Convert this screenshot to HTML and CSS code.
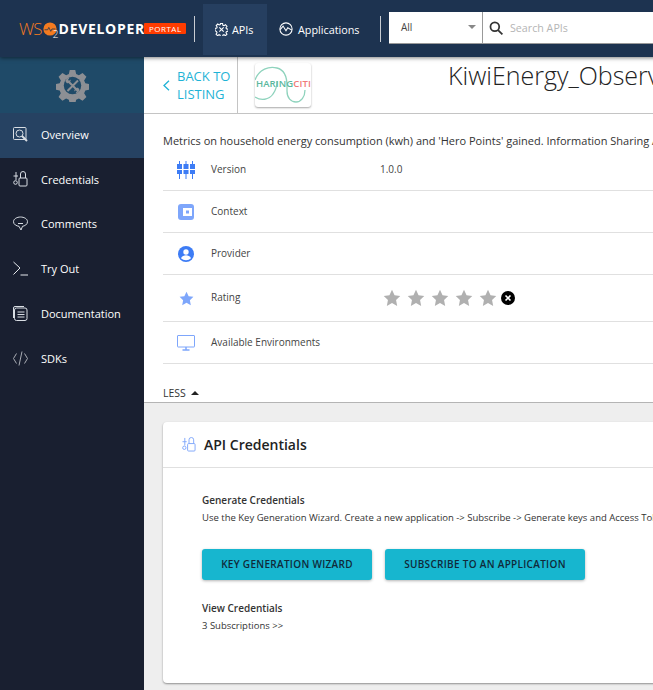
FILE: index.html
```html
<!DOCTYPE html>
<html lang="en">
<head>
  <meta charset="UTF-8" />
  <title>KiwiEnergy_Observations - WSO2 Developer Portal</title>
  <link rel="stylesheet" href="styles.css">
</head>
<body>
  <header class="topbar">
    <div class="logo">
      <span class="logo-wso">WS</span>
      <svg class="logo-o" width="14" height="14" viewBox="0 0 18 18"><circle cx="9" cy="9" r="8.500" fill="#f47b20"/><path d="M2 10h4l1.500-3 2.500 5 1.500-3h4.500" fill="none" stroke="#1d3350" stroke-width="1"/></svg>
      <span class="logo-two">2</span>
      <span class="logo-dev">DEVELOPER</span>
      <span class="logo-portal">PORTAL</span>
    </div>
    <div class="bar-sep"></div>
    <a class="nav-link active">
      <svg width="13" height="13" viewBox="0 0 24 24" fill="none" stroke="#fff" stroke-width="2"><path d="M10 1h4l.6 3.200 2 .8 2.700-1.800 2.800 2.800-1.800 2.700.8 2 3.200.6v4l-3.200.6-.8 2 1.800 2.700-2.800 2.800-2.700-1.800-2 .8-.6 3.200h-4l-.6-3.200-2-.8-2.700 1.800-2.800-2.800 1.800-2.700-.8-2L0 14v-4l3.200-.6.8-2L2.200 4.700 5 1.900l2.700 1.800 2-.8z"/><path d="M8 8l8 8M16 8l-8 8"/></svg>
      APIs
    </a>
    <a class="nav-link">
      <svg width="14" height="14" viewBox="0 0 24 24" fill="none" stroke="#fff" stroke-width="1.800"><circle cx="12" cy="12" r="10.500"/><path d="M2 13l5-6 5 8 3-5 7 4"/></svg>
      Applications
    </a>
    <div class="bar-sep sep-two"></div>
    <div class="search">
      <div class="search-type">All<span class="caret"></span></div>
      <div class="search-box">
        <svg width="14" height="14" viewBox="0 0 24 24" fill="none" stroke="#333" stroke-width="3"><circle cx="10" cy="10" r="7.500"/><path d="M15.500 15.500L23 23"/></svg>
        <span>Search APIs</span>
      </div>
    </div>
  </header>

  <div class="layout">
    <aside class="sidebar">
      <div class="side-head">
        <svg width="33" height="33" viewBox="0 0 36 36">
          <path fill="#8d8f94" d="M15 1h6l1 4.500 3 1.300 4-2.500 4.200 4.200-2.500 4 1.300 3 4.500 1v6l-4.500 1-1.300 3 2.500 4-4.200 4.200-4-2.500-3 1.300-1 4.500h-6l-1-4.500-3-1.300-4 2.500-4.200-4.200 2.500-4-1.300-3-4.500-1v-6l4.500-1 1.300-3-2.500-4 4.200-4.200 4 2.500 3-1.300z"/>
          <circle cx="18" cy="18" r="9.500" fill="#1f4a68"/>
          <path d="M13 13l10.500 10.500M24 12.500L12.500 24" stroke="#8d8f94" stroke-width="2.200"/>
          <path d="M10.500 14a3.500 3.500 0 0 1 4-4l-1.500 2 1 1 2-1.500a3.500 3.500 0 0 1-4 4z" fill="#8d8f94"/>
          <path d="M25.500 22a3.500 3.500 0 0 1-4 4l1.500-2-1-1-2 1.500a3.500 3.500 0 0 1 4-4z" fill="#8d8f94"/>
        </svg>
      </div>
      <a class="side-item current">
        <svg width="15" height="15" viewBox="0 0 15 15" fill="none" stroke="#d8dde3"><rect x=".5" y=".5" width="12.500" height="12" rx="1"/><circle cx="6.500" cy="6.500" r="3.500"/><path d="M9 9l5 5" stroke-width="2"/></svg>
        Overview
      </a>
      <a class="side-item">
        <svg width="15" height="16" viewBox="0 0 15 16" fill="none" stroke="#d8dde3"><rect x="6" y="7" width="8" height="8" rx="1"/><path d="M7.500 7V3a2.500 2.500 0 0 1 5 0v4M3 1v8"/><circle cx="2.500" cy="11.500" r="1.800"/><path d="M.5 5H5"/></svg>
        Credentials
      </a>
      <a class="side-item">
        <svg width="15" height="15" viewBox="0 0 15 15" fill="none" stroke="#d8dde3"><path d="M7.500 1C11 1 14.500 2.800 14.500 5.700S11.500 10 9.500 10.300L8 14 6 10.300C3.500 10 .5 8.500.5 5.700S4 1 7.500 1z"/><path d="M5 7.500h5"/></svg>
        Comments
      </a>
      <a class="side-item">
        <svg width="15" height="15" viewBox="0 0 15 15" fill="none" stroke="#e6e9ed"><path d="M.5 1l6.500 6-6.500 6.500M7.500 14H15"/></svg>
        Try Out
      </a>
      <a class="side-item">
        <svg width="15" height="15" viewBox="0 0 15 15" fill="none" stroke="#d8dde3"><rect x="1.500" y="2" width="12.500" height="12.500" rx="2"/><path d="M.5 12V2A1.500 1.500 0 0 1 2 .5h9M4.500 6h7M4.500 8.500h7M4.500 11h7"/></svg>
        Documentation
      </a>
      <a class="side-item">
        <svg width="15" height="15" viewBox="0 0 15 15" fill="none" stroke="#a9adb5"><path d="M3.500 2.500L.5 7.500l3 5M11.500 2.500l3 5-3 5M9 .5L6 14.500"/></svg>
        SDKs
      </a>
    </aside>

    <main class="content">
      <div class="api-head">
        <a class="back">
          <svg width="7" height="11" viewBox="0 0 7 11" fill="none" stroke="#1fb3d6" stroke-width="1.300"><path d="M6 .8L1 5.500l5 4.700"/></svg>
          <span>BACK TO<br>LISTING</span>
        </a>
        <div class="api-logo-wrap">
          <div class="api-logo">
            <svg width="56" height="44" viewBox="0 0 56 44" fill="none" stroke="#8fd3bd" stroke-width="1.300"><path d="M0 17C4 6 14 3 22 5s10 10 10 18v5c0 7 4 11 9 11s9-5 9-12"/><path d="M0 34c6 4 14 3 18-3 3-4 4-9 4-13"/></svg>
            <span class="sharing">HARING<b>CITII</b></span>
          </div>
        </div>
        <h1 class="api-title">KiwiEnergy_Observations</h1>
      </div>

      <div class="details">
        <p class="desc">Metrics on household energy consumption (kwh) and 'Hero Points' gained. Information Sharing Agreement applies to this data.</p>
        <div class="info-row">
          <div class="info-icon"><svg width="18" height="18" viewBox="0 0 18 18" fill="#3d7cf5"><path d="M2 0h1v3h2v5H0V3h2zM8.500 0h1v3h2v5h-5V3h2zM15 0h1v3h2v5h-5V3h2z"/><path d="M0 9h5v4H3v5H2v-5H0zM6.500 9h5v4h-2v5h-1v-5h-2zM13 9h5v4h-2v5h-1v-5h-2z"/></svg></div>
          <div class="info-label">Version</div>
          <div class="info-value">1.0.0</div>
        </div>
        <div class="info-row">
          <div class="info-icon"><svg width="16" height="16" viewBox="0 0 16 16"><rect width="16" height="16" rx="3" fill="#7ea6fb"/><rect x="5" y="4" width="9" height="8" fill="#fff"/><rect x="8" y="6.500" width="3" height="3" fill="#7ea6fb"/></svg></div>
          <div class="info-label">Context</div>
        </div>
        <div class="info-row">
          <div class="info-icon"><svg width="16" height="16" viewBox="0 0 16 16"><circle cx="8" cy="8" r="8" fill="#3d7cf5"/><circle cx="8" cy="6" r="2.700" fill="#fff"/><path d="M3 12.300c1-2.300 3-3 5-3s4 .7 5 3c-1.300 1.300-3 2-5 2s-3.700-.7-5-2z" fill="#fff"/></svg></div>
          <div class="info-label">Provider</div>
        </div>
        <div class="info-row row-rating">
          <div class="info-icon"><svg width="15" height="15" viewBox="0 0 24 24" fill="#7ea6fb"><path d="M12 1l3.400 7.400 7.600.9-5.600 5.300 1.500 8L12 18.700 5.100 22.600l1.500-8L1 9.300l7.600-.9z"/></svg></div>
          <div class="info-label">Rating</div>
          <div class="stars">
            <svg width="18" height="18" viewBox="0 0 24 24" fill="#b0b0b0"><path d="M12 1l3.400 7.400 7.600.9-5.600 5.300 1.500 8L12 18.700 5.100 22.600l1.500-8L1 9.300l7.600-.9z"/></svg>
            <svg width="18" height="18" viewBox="0 0 24 24" fill="#b0b0b0"><path d="M12 1l3.400 7.400 7.600.9-5.600 5.300 1.500 8L12 18.700 5.100 22.600l1.500-8L1 9.300l7.600-.9z"/></svg>
            <svg width="18" height="18" viewBox="0 0 24 24" fill="#b0b0b0"><path d="M12 1l3.400 7.400 7.600.9-5.600 5.300 1.500 8L12 18.700 5.100 22.600l1.500-8L1 9.300l7.600-.9z"/></svg>
            <svg width="18" height="18" viewBox="0 0 24 24" fill="#b0b0b0"><path d="M12 1l3.400 7.400 7.600.9-5.600 5.300 1.500 8L12 18.700 5.100 22.600l1.500-8L1 9.300l7.600-.9z"/></svg>
            <svg width="18" height="18" viewBox="0 0 24 24" fill="#b0b0b0"><path d="M12 1l3.400 7.400 7.600.9-5.600 5.300 1.500 8L12 18.700 5.100 22.600l1.500-8L1 9.300l7.600-.9z"/></svg>
            <svg class="clear-rating" width="14" height="14" viewBox="0 0 14 14"><circle cx="7" cy="7" r="7" fill="#000"/><path d="M4.500 4.500l5 5M9.500 4.500l-5 5" stroke="#fff" stroke-width="1.600"/></svg>
          </div>
        </div>
        <div class="info-row">
          <div class="info-icon"><svg width="18" height="16" viewBox="0 0 18 16" fill="none" stroke="#7ea6fb"><rect x=".5" y=".5" width="17" height="11.500" rx=".5"/><path d="M9 12v3M5.500 15h7" stroke-width="1.500"/></svg></div>
          <div class="info-label">Available Environments</div>
        </div>
        <div class="less">LESS<span class="less-arrow"></span></div>
      </div>

      <section class="panel-area">
        <div class="card">
          <div class="card-head">
            <svg width="14" height="15" viewBox="0 0 15 16" fill="none" stroke="#7ea6fb"><rect x="6" y="7" width="8" height="8" rx="1"/><path d="M7.500 7V3a2.500 2.500 0 0 1 5 0v4M3 1v8"/><circle cx="2.500" cy="11.500" r="1.800"/><path d="M.5 5H5"/></svg>
            <h2>API Credentials</h2>
          </div>
          <div class="card-body">
            <h3>Generate Credentials</h3>
            <p>Use the Key Generation Wizard. Create a new application -&gt; Subscribe -&gt; Generate keys and Access Token to invoke this API.</p>
            <div class="actions">
              <button class="btn btn-key">KEY GENERATION WIZARD</button>
              <button class="btn btn-sub">SUBSCRIBE TO AN APPLICATION</button>
            </div>
            <h3>View Credentials</h3>
            <p>3 Subscriptions &gt;&gt;</p>
          </div>
        </div>
      </section>
    </main>
  </div>
</body>
</html>
```

FILE: styles.css
```css
* {
  margin: 0;
  padding: 0;
  box-sizing: border-box;
}

html, body {
  height: 100%;
  overflow: hidden;
}

body {
  font-family: "Open Sans", sans-serif;
  font-size: 11px;
  color: #333;
  background: #fff;
  width: 653px;
  display: flex;
  flex-direction: column;
}

.topbar {
  flex: 0 0 57px;
  width: 1000px;
  background: #1d3350;
  display: flex;
  align-items: center;
  color: #fff;
  padding-left: 19px;
  position: relative;
  z-index: 2;
  box-shadow: 0 1px 4px rgba(0, 0, 0, 0.5);
}

.logo {
  display: flex;
  align-items: center;
  width: 167px;
  height: 24px;
}

.logo-wso {
  color: #f47b20;
  font-size: 17px;
  font-weight: 300;
  letter-spacing: -0.8px;
}

.logo-o {
  margin-left: 1px;
}

.logo-two {
  font-size: 10px;
  font-weight: 300;
  margin: 10px 0 0 -4px;
}

.logo-dev {
  font-size: 14px;
  font-weight: 700;
  letter-spacing: 0.7px;
  margin-left: 0;
}

.logo-portal {
  background: #ff3c00;
  font-size: 8px;
  letter-spacing: 0.5px;
  line-height: 11px;
  padding: 0 4px 0 5px;
  margin-left: -1px;
  margin-top: -1px;
  border-radius: 1px;
}

.bar-sep {
  width: 1px;
  height: 26px;
  background: #c8ccd2;
  margin-left: 8px;
}

.sep-two {
  margin-left: 0;
}

.nav-link {
  display: flex;
  align-items: center;
  gap: 4px;
  height: 51px;
  font-size: 10.800px;
  color: #fff;
  margin-top: 1px;
  padding: 0 12px;
}

.nav-link.active {
  width: 64px;
  margin-left: 8px;
  padding: 0 12px;
  background: #263f60;
}

.nav-link:not(.active) {
  width: 113px;
  padding-left: 12px;
  gap: 5px;
}

.search {
  display: flex;
  height: 32px;
  margin-left: 8px;
  margin-top: -1px;
  background: #fff;
  border-bottom: 1px solid #999;
}

.search-type {
  width: 94px;
  padding-left: 12px;
  color: #444;
  font-size: 10px;
  line-height: 31px;
  border-right: 1px solid #999;
  position: relative;
}

.caret {
  position: absolute;
  right: 6px;
  top: 13px;
  border: 4px solid transparent;
  border-top: 4px solid #888;
  border-bottom: 0;
}

.search-box {
  width: 400px;
  display: flex;
  align-items: center;
  gap: 7px;
  padding-left: 6px;
  color: #b5b5b5;
  font-size: 10.700px;
}

.layout {
  flex: 1;
  display: flex;
  min-height: 0;
}

.sidebar {
  flex: 0 0 144px;
  background: #191f30;
}

.side-head {
  height: 56px;
  background: #1f4a68;
  display: flex;
  align-items: center;
  justify-content: center;
}

.side-item {
  height: 44.800px;
  display: flex;
  align-items: center;
  gap: 13px;
  padding: 0 0 2px 13px;
  color: #fff;
  font-size: 11px;
}

.side-item.current {
  background: #264262;
}

.content {
  flex: 1;
  min-width: 0;
  display: flex;
  flex-direction: column;
}

.api-head {
  flex: 0 0 57px;
  display: flex;
  border-bottom: 1px solid #c4c4c4;
  width: 900px;
}

.back {
  width: 94px;
  display: flex;
  align-items: center;
  gap: 7px;
  padding-left: 19px;
  border-right: 1px solid #c4c4c4;
  color: #1fb3d6;
  font-size: 13px;
  line-height: 18px;
}

.api-logo-wrap {
  padding: 6px 0 0 17px;
  width: 210px;
}

.api-logo {
  width: 56px;
  height: 44px;
  border-radius: 3px;
  box-shadow: 0 1px 2px rgba(0, 0, 0, 0.35);
  position: relative;
  overflow: hidden;
}

.sharing {
  position: absolute;
  left: 1px;
  top: 14px;
  font-size: 9.500px;
  font-weight: 600;
  letter-spacing: 0.1px;
  color: #5bb79d;
  white-space: nowrap;
}

.sharing b {
  font-weight: 600;
  color: #f07a78;
}

.api-title {
  font-size: 25px;
  font-weight: 300;
  color: #222;
  white-space: nowrap;
  line-height: 36px;
}

.details {
  flex: 0 0 289px;
  padding-left: 19px;
  width: 900px;
  border-bottom: 1px solid #b4b4b4;
}

.desc {
  font-size: 11px;
  line-height: 16px;
  white-space: nowrap;
  padding-top: 19px;
  margin-bottom: 0;
}

.info-row {
  height: 42px;
  display: flex;
  align-items: center;
  border-bottom: 1px solid #e0e0e0;
  font-size: 10px;
  color: #444;
}

.row-rating {
  height: 47px;
}

.info-icon {
  width: 48px;
  padding: 0 15px 0 13px;
  display: flex;
  align-items: center;
  justify-content: center;
}

.info-label {
  width: 169px;
  padding-bottom: 2px;
}

.info-value {
  padding-bottom: 2px;
}

.stars {
  display: flex;
  align-items: center;
  gap: 6px;
  margin-left: 3px;
}

.clear-rating {
  margin-left: -2px;
}

.less {
  margin-top: 22px;
  font-size: 10.500px;
  display: flex;
  align-items: center;
  gap: 5px;
}

.less-arrow {
  border: 4px solid transparent;
  border-bottom: 4px solid #222;
  border-top: 0;
}

.panel-area {
  flex: 1;
  background: #eee;
  padding: 19px 0 0 19px;
  width: 900px;
}

.card {
  height: 261px;
  background: #fff;
  border-radius: 4px;
  box-shadow: 0 1px 2px rgba(0, 0, 0, 0.4);
}

.card-head {
  height: 46px;
  display: flex;
  align-items: center;
  gap: 8px;
  padding-left: 19px;
  border-bottom: 1px solid #e0e0e0;
}

.card-head h2 {
  font-size: 14px;
  font-weight: 600;
  color: #222;
}

.card-body {
  padding: 24px 0 0 39px;
  font-size: 9.500px;
  line-height: 18px;
  white-space: nowrap;
}

.card-body h3 {
  font-size: 10px;
  font-weight: 600;
  line-height: 17px;
}

.actions {
  display: flex;
  gap: 13px;
  margin: 22px 0 20px;
}

.btn {
  height: 31px;
  padding-bottom: 2px;
  border: none;
  border-radius: 3px;
  background: #17b6cf;
  color: #102a3a;
  font-family: "Open Sans", sans-serif;
  font-size: 10px;
  font-weight: 600;
  letter-spacing: 0.3px;
  box-shadow: 0 1px 3px rgba(0, 0, 0, 0.3);
}

.btn-key {
  width: 170px;
}

.btn-sub {
  width: 200px;
}
```
